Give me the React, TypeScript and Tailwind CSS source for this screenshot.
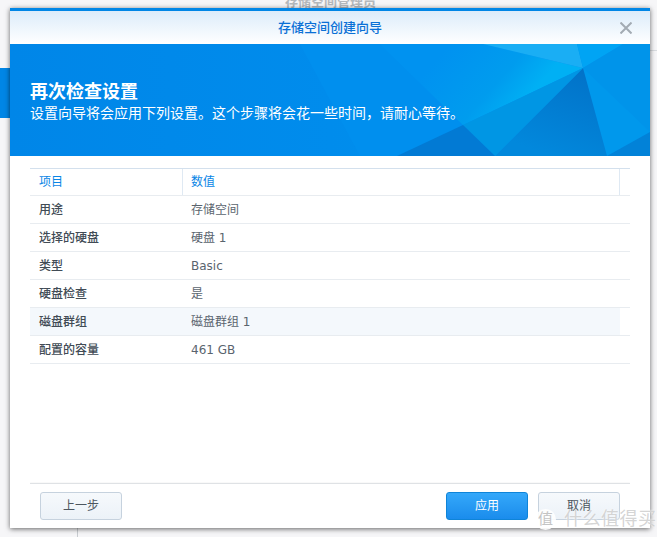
const font = '[font-family:"DejaVu_Sans","Noto_Sans_CJK_SC",sans-serif]';

const rows = [
  ['用途', '存储空间'],
  ['选择的硬盘', '硬盘 1'],
  ['类型', 'Basic'],
  ['硬盘检查', '是'],
  ['磁盘群组', '磁盘群组 1'],
  ['配置的容量', '461 GB'],
];

function BannerArt() {
  return (
    <svg className="absolute inset-0 h-full w-full" viewBox="0 0 640 112" preserveAspectRatio="none">
      <defs>
        <linearGradient id="base" gradientUnits="userSpaceOnUse" x1="0" y1="0" x2="640" y2="0">
          <stop offset="0" stopColor="#0086e8" />
          <stop offset="0.5" stopColor="#008cec" />
          <stop offset="1" stopColor="#0096ee" />
        </linearGradient>
        <linearGradient id="band" gradientUnits="userSpaceOnUse" x1="440" y1="0" x2="510" y2="62">
          <stop offset="0" stopColor="#0092f0" />
          <stop offset="0.65" stopColor="#009cee" />
          <stop offset="1" stopColor="#00b0f4" />
        </linearGradient>
        <linearGradient id="dark" gradientUnits="userSpaceOnUse" x1="573" y1="24" x2="540" y2="112">
          <stop offset="0" stopColor="#0272c8" />
          <stop offset="1" stopColor="#0288dc" />
        </linearGradient>
      </defs>
      <rect width="640" height="112" fill="url(#base)" />
      <polygon points="290,0 350,112 387,112 453,81 573,24 473,0" fill="#008fee" />
      <polygon points="370,0 453,81 573,24 473,0" fill="url(#band)" />
      <polygon points="473,0 567,0 573,24" fill="#1aaef4" />
      <polygon points="567,0 613,0 573,24" fill="#00a4f4" />
      <polygon points="613,0 640,0 640,88 573,24" fill="#0094ea" />
      <polygon points="573,24 640,88 597,112" fill="#0098ec" />
      <polygon points="640,88 640,112 597,112" fill="#0282d8" />
      <polygon points="573,24 597,112 485,112" fill="url(#dark)" />
      <polygon points="573,24 485,112 453,81" fill="#0096e4" />
      <polygon points="453,81 485,112 387,112" fill="#027ad4" />
    </svg>
  );
}

export default function App() {
  return (
    <div className={`relative h-[537px] w-[657px] overflow-hidden bg-[#f6f6f8] ${font}`}>
      {/* page behind the dialog */}
      <div className="absolute left-[285px] top-[-8px] text-[13px] font-bold text-[#b4b8bc]">存储空间管理员</div>
      <div className="absolute left-0 top-[68px] h-[50px] w-[10px] bg-[#0086e6]" />
      <div className="absolute left-[650px] top-[50px] h-px w-[7px] bg-[#d8dce0]" />
      <div className="absolute left-[77px] top-[528px] h-[9px] w-px bg-[#c8ccd0]" />

      {/* dialog */}
      <div className="absolute left-[10px] top-[8px] flex h-[520px] w-[640px] flex-col bg-white shadow-[0_1px_5px_rgba(0,0,0,0.6)]">
        <div className="h-[3px] bg-[#0086e6]" />
        <div className="relative flex h-[33px] items-center justify-center bg-gradient-to-b from-[#dcecfa] to-white">
          <span className="text-[13px] font-medium text-[#0a70d6]">存储空间创建向导</span>
          <svg className="absolute right-[18px] top-[11px] h-[12px] w-[12px]" viewBox="0 0 12 12">
            <path d="M0.5 0.5 L11.5 11.5 M11.5 0.5 L0.5 11.5" stroke="#a3abb3" strokeWidth="2" fill="none" />
          </svg>
        </div>

        <div className="relative h-[112px] overflow-hidden bg-[#0088ea]">
          <BannerArt />
          <div className="relative pl-5 pt-[35px] text-white">
            <div className="text-lg leading-[25px] font-bold">再次检查设置</div>
            <div className="text-sm leading-[18px]">{'设置向导将会应用下列设置。这个步骤将会花一些时间\uFF0C请耐心等待。'}</div>
          </div>
        </div>

        <div className="mx-5 mt-3 border-t-[1px] border-[#d3e0ed] text-xs">
          <div className="flex h-[27px] items-center border-b border-[#e8ecf0] text-[#0a86e6]">
            <div className="flex h-full w-[152px] items-center pl-[9px]">项目</div>
            <div className="flex h-full w-[438px] items-center border-x border-[#dfe9f3] pl-2">数值</div>
          </div>
          {rows.map(([label, value], i) => (
            <div key={label} className="h-[28px] border-b border-[#e8ecf0]">
              <div className={`flex h-full w-[590px] items-center ${i === 4 ? 'bg-[#f4f8fc]' : ''}`}>
                <div className="w-[152px] pl-[9px] font-medium text-[#414b55]">{label}</div>
                <div className="pl-[9px] text-[#5a646e]">{value}</div>
              </div>
            </div>
          ))}
        </div>

        <div className="mt-auto mx-5 border-t border-[#dfe2e5] shadow-[0_-1px_1px_rgba(0,0,0,0.03)]" />
        <div className="flex h-[44px] items-start pl-[30px] pr-[30px] pt-2">
          <button className="h-[28px] w-[82px] rounded-[3px] border border-[#c6d2de] bg-gradient-to-b from-[#f6f9fc] to-[#ecf2f8] text-xs text-[#4d565f]">
            上一步
          </button>
          <button className="ml-auto h-[28px] w-[82px] rounded-[3px] border border-[#0f84d8] bg-gradient-to-b from-[#34a8fa] to-[#1a8cec] text-xs text-white">
            应用
          </button>
          <button className="ml-[10px] h-[28px] w-[82px] rounded-[3px] border border-[#c6d2de] bg-gradient-to-b from-[#f6f9fc] to-[#ecf2f8] text-xs text-[#4d565f]">
            取消
          </button>
        </div>
      </div>

      {/* watermark */}
      <div className="absolute left-[535px] top-[509px] flex h-[21px] w-[21px] items-center justify-center rounded-full bg-white/90 text-[15px] text-[#c4c4c4]">
        值
      </div>
      <div className="absolute left-[564px] top-[509px] whitespace-nowrap text-[18px] leading-[20px] tracking-[0.5px] text-[#cfcfcf]/90 [text-shadow:0_0_2px_white]">
        什么值得买
      </div>
    </div>
  );
}
